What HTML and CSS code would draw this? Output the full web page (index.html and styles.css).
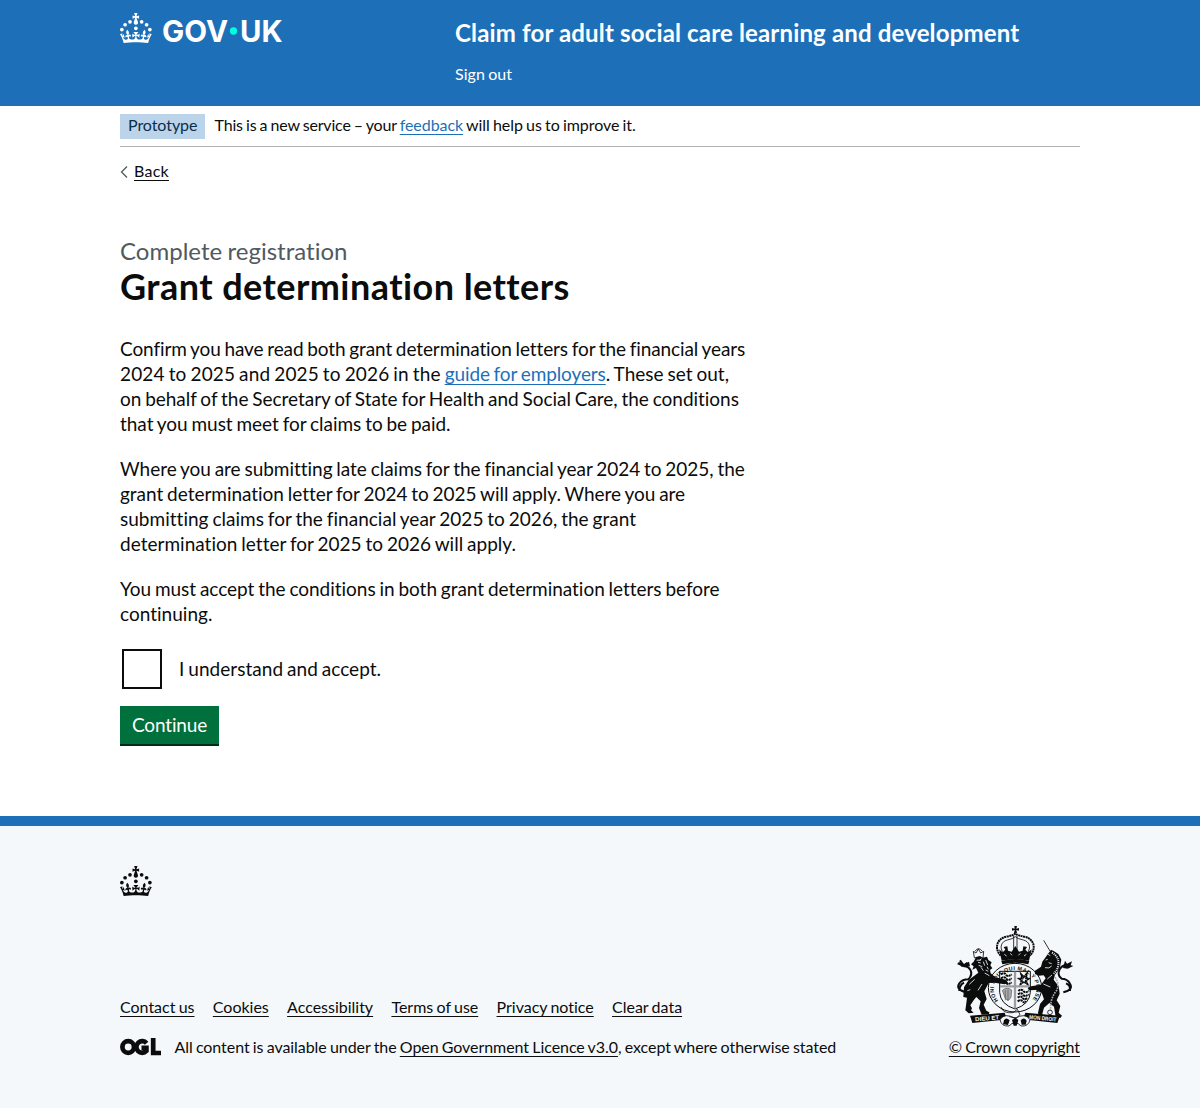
FILE: index.html
```html
<!DOCTYPE html>
<html lang="en">
<head>
<meta charset="utf-8">
<title>Grant determination letters</title>
<link rel="stylesheet" href="styles.css">
</head>
<body>
<svg class="symbols" width="0" height="0" aria-hidden="true">
  <symbol id="crown" viewBox="0 0 64 60">
    <circle cx="20" cy="17.6" r="3.7"/><circle cx="10.2" cy="23.5" r="3.7"/><circle cx="3.7" cy="33.2" r="3.7"/>
    <circle cx="31.7" cy="30.6" r="3.7"/><circle cx="43.3" cy="17.6" r="3.7"/><circle cx="53.2" cy="23.5" r="3.7"/><circle cx="59.7" cy="33.2" r="3.7"/>
    <path d="M33.1,9.8c.2-.1.3-.3.5-.5l4.6,2.4v-6.8l-4.6,1.5c-.1-.2-.3-.3-.5-.5l1.9-5.9h-6.7l1.9,5.9c-.2.1-.3.3-.5.5l-4.6-1.5v6.8l4.6-2.4c.1.2.3.3.5.5l-2.6,8c-.9,2.8,1.2,5.7,4.1,5.7h0c3,0,5.1-2.9,4.1-5.7l-2.6-8ZM37,37.9s-3.4,3.8-4.1,6.1c2.2,0,4.2-.5,6.4-2.8l-.7,8.5c-2-2.8-4.4-4.1-5.7-3.8.1,3.1.5,6.7,5.8,7.2,3.7.3,6.7-1.5,7-3.8.4-2.6-2-4.3-3.7-1.6-1.4-4.5,2.4-6.1,4.9-3.2-1.9-4.5-1.8-7.7,2.4-10.9,3,4,2.6,7.3-1.2,11.1,2.4-1.3,6.2,0,4,4.6-1.2-2.8-3.7-2.2-4.2.2-.3,1.7.7,3.7,3,4.2,1.9.3,4.7-.9,7-5.9-1.3,0-2.4.7-3.9,1.7l2.4-8c.6,2.3,1.4,3.7,2.2,4.5.6-1.6.5-2.8,0-5.3l5,1.8c-2.6,3.6-5.2,8.7-7.3,17.5-7.4-1.1-15.7-1.7-24.5-1.7h0c-8.8,0-17.1.6-24.5,1.7-2.1-8.9-4.7-13.9-7.3-17.5l5-1.8c-.5,2.5-.6,3.7,0,5.3.8-.8,1.6-2.3,2.2-4.5l2.4,8c-1.5-1-2.6-1.7-3.9-1.7,2.3,5,5.2,6.2,7,5.9,2.3-.4,3.3-2.4,3-4.2-.5-2.4-3-3.1-4.2-.2-2.2-4.6,1.6-6,4-4.6-3.7-3.7-4.2-7.1-1.2-11.1,4.2,3.2,4.3,6.4,2.4,10.9,2.5-2.8,6.3-1.3,4.9,3.2-1.8-2.7-4.1-1-3.7,1.6.3,2.3,3.3,4.1,7,3.8,5.4-.5,5.7-4.2,5.8-7.2-1.3-.2-3.7,1-5.7,3.8l-.7-8.5c2.2,2.3,4.2,2.7,6.4,2.8-.7-2.3-4.1-6.1-4.1-6.1h10.6,0Z"/>
  </symbol>
</svg>

<header class="header">
  <div class="container header-inner">
    <div class="header-logo">
      <svg class="logo" viewBox="0 0 324 60" role="img" aria-label="GOV.UK">
        <use href="#crown" width="64" height="60"/>
        <text class="wordmark" x="84" y="57.5" textLength="132" lengthAdjust="spacingAndGlyphs">GOV</text>
        <circle class="dot" cx="227" cy="36" r="7.3"/>
        <text class="wordmark" x="240" y="57.5" textLength="85" lengthAdjust="spacingAndGlyphs">UK</text>
      </svg>
    </div>
    <div class="header-content">
      <div class="service-name">Claim for adult social care learning and development</div>
      <a class="sign-out" href="#">Sign out</a>
    </div>
  </div>
</header>

<div class="container">
  <div class="phase-banner">
    <strong class="tag">Prototype</strong>
    <span class="phase-text"><span class="close">This is a new service – your </span><a class="link" href="#">feedback</a> will help us to improve it.</span>
  </div>
  <a class="back-link" href="#"><svg class="chevron" viewBox="0 0 8 12"><path d="M7 .5 L1.5 6 L7 11.5"/></svg><span>Back</span></a>

  <main class="main">
    <span class="caption">Complete registration</span>
    <h1 class="heading">Grant determination letters</h1>
    <p class="body"><span class="snug">Confirm you have read both grant determination letters for the financial years</span><br>
      <span class="wide">2024 to 2025 and 2025 to 2026 in the </span><a class="link snug" href="#">guide for employers</a><span class="loose">. These set out,</span><br>
      <span class="even">on behalf of the Secretary of State for Health and Social Care, the conditions</span><br>
      <span class="even">that you must meet for claims to be paid.</span></p>
    <p class="body"><span class="even">Where you are submitting late claims for the financial year 2024 to 2025, the</span><br>
      <span class="even">grant determination letter for 2024 to 2025 will apply. Where you are</span><br>
      <span class="loose">submitting claims for the financial year 2025 to 2026, the grant</span><br>
      <span class="loose">determination letter for 2025 to 2026 will apply.</span></p>
    <p class="body"><span class="even">You must accept the conditions in both grant determination letters before</span><br>
      <span class="loose">continuing.</span></p>
    <label class="checkbox"><input class="checkbox-input" type="checkbox"><span class="checkbox-label">I understand and accept.</span></label>
    <button class="button" type="button">Continue</button>
  </main>
</div>

<footer class="footer">
  <div class="container">
    <svg class="footer-crown" viewBox="0 0 64 60"><use href="#crown" width="64" height="60"/></svg>
    <div class="footer-meta">
      <div>
        <nav class="footer-links">
          <a href="#">Contact us</a><a href="#">Cookies</a><a href="#">Accessibility</a><a href="#">Terms of use</a><a href="#">Privacy notice</a><a href="#">Clear data</a>
        </nav>
        <div class="licence">
          <svg class="ogl" viewBox="0 0 41 18" role="img" aria-label="OGL">
            <circle cx="8.2" cy="9" r="5.8"/>
            <path d="M26.6 5.2 A5.8 5.8 0 1 0 26.4 13 V9.8 H21.5"/>
            <path d="M33.2 0 V15 H41"/>
          </svg>
          <span>All content is available under the <a href="#">Open Government Licence v3.0</a>, except where otherwise stated</span>
        </div>
      </div>
      <a class="copyright" href="#">
        <svg class="arms" viewBox="30 30 360 309" aria-hidden="true">
          <!-- Royal crown -->
          <path d="M208 33h8l-2 8 8-2v8l-8-2 2 9h-9l2-9-8 2v-8l8 2z"/>
          <path class="rope" d="M167 122C145 98 158 70 184 65q18-3 27-9q9 6 27 9c26 5 39 33 17 57"/>
          <path class="thin" d="M176 116C161 96 170 79 187 75q16-3 24-10q8 7 24 10c17 4 26 21 11 41M206 62v48M216 62v48"/>
          <path d="M162 103l11 9 8-8-5-8 11-2 2 13 11 3 11-17 11 17 11-3 2-13 11 2-5 8 8 8 11-9-8 34q-41-9-82 0z"/>
          <path class="pale" d="M178 118l7 5M196 115l5 6M220 121l6-6M237 123l7-5"/>
          <!-- Garter and shield -->
          <ellipse class="garter" cx="210" cy="218" rx="80" ry="73"/>
          <path d="M169 138q42-12 84 0l-3 10q-39-9-78 0z"/>
          <path class="shield" d="M164 169H256V232Q254 268 210 282Q166 268 164 232Z"/>
          <path id="motto-ring" class="none" d="M160 256A64 56 0 1 1 260 256"/>
          <text class="motto" textLength="262"><textPath href="#motto-ring">HONI SOIT QUI MAL Y PENSE</textPath></text>
          <path class="quarter" d="M168 178q10-7 15 1t17-1M168 190q11-7 16 1t16-1M168 202q10-7 15 1t17-1M220 228q9-8 15 0t17-1M219 238q10-7 15 1t17-1M218 248q10-7 15 1t15-1M218 259q10-7 15 0t9-1"/>
          <path class="quarter" d="M229 179l7 7 9-9-2 12 8 2-8 6 4 10-10-7-10 7 3-11-7-5 9-1z"/>
          <path class="harp" d="M172 226q14-12 28-1l-2 22q-9 17-18 1zM181 226v30M189 224v34"/>
          <path class="bar" d="M210 170V280M165 214H255"/>
          <!-- Lion -->
          <path class="thin" d="M88 128l-3-19 8 5 7-12 7 12 9-5-2 20zM90 109q10-16 22 0"/>
          <path d="M93 126l12-3 8 5 13-3 4 10 10 7-4 9 6 9-7 5 2 10 14 12 20 4 13 4 5 8-10 5-31-5-17 1-13 25 7 23-9 17 8 18 9 5-1 6-22 1-8-20 5-20-13-13-7 8-11 17 5 9-3 6 8 7-15 2-10-9 3-22 2-16-11-2 2-29 14-22 29-22-7-14-11 5 4-10-8-6 8-8z"/>
          <path class="pale" d="M95 136l13-1M99 142l8 2M115 140l4 12M122 135l6 15M126 155l4 8M101 151l11 4M119 174l14 8M89 193l-16 15M76 224l-9 3M111 207l-12 19M108 157l7 10M130 169l-8-4M109 131l-5 6"/>
          <path class="tail" d="M60 231Q31 222 43 205Q52 193 70 193Q84 178 76 164Q68 151 55 154M57 203q-14 7-14 25M45 136l12 17M38 145l20 8M67 143l-11 9"/>
          <path d="M40 140l18 7 14-7 3 14-12 1-14 0z"/>
          <!-- Unicorn -->
          <path class="thin" d="M296 76l19 32"/>
          <path d="M318 104l8 4 14 9 9 17-5 27-14 18-4 15 15 20 3 22-9 20 11 17-5 20 10 9-5 7-14-3-5-31-14-11-16 14-5 18 5 13-16-3-2-13 6-26 12-14-7-20-18-8-20 1-4-7 10-5 30-5 14-19-6-9-15 1-11-5-1-9 19-13 4-15z"/>
          <path class="pale mane" d="M321 113q22 12 19 38q-3 16-14 25"/>
          <path class="pale" d="M309 118l7 4M302 135l6-2M300 158q13 4 20-5M321 180l-14 12M295 207l21 9M311 143l9 3"/>
          <path class="chain" d="M330 187q17 24 1 45t-14 55"/>
          <circle class="thin" cx="315" cy="292" r="7"/>
          <path class="tail" d="M355 232q31-8 20-26-8-15-25-15-16-12-5-30 8-12 20-10M363 205q14 5 12 23"/>
          <path d="M360 137l6 9 15-7-4 12 8 2-17 8-14-2z"/>
          <!-- Motto ribbon -->
          <path d="M75 302l104-9 6 17-17 5-86 9zM345 302l-104-9-6 17 17 5 85 9z"/>
          <path class="ribbon" d="M165 314q14-22 45-4q31-18 45 4-4 21-27 19-8-10-18-9-10-1-18 9-23 2-27-19z"/>
          <path d="M177 316q6-11 17 0l-5 14-15-2zM227 316q10-11 18 1l-3 12-12 0zM201 315l10-7 9 7-5 17h-9z"/>
          <path class="thin" d="M168 276q5 20 36 17l13-10 8 16-11 10-21-4"/>
          <text class="ribbon-text" transform="translate(91 319) rotate(-5)" textLength="72" lengthAdjust="spacingAndGlyphs">DIEU ET</text>
          <text class="ribbon-text" transform="translate(252 312) rotate(5)" textLength="82" lengthAdjust="spacingAndGlyphs">MON DROIT</text>
        </svg>
        <span>© Crown copyright</span>
      </a>
    </div>
  </div>
</footer>
</body>
</html>
```
FILE: styles.css
```css
* { box-sizing: border-box; }

body {
  margin: 0;
  background: #fff;
  color: #0b0c0c;
  font: 16px/20px Lato, "Liberation Sans", sans-serif;
  font-variant-ligatures: none;
  letter-spacing: -.06px;
  word-spacing: -.8px;
}

a {
  color: #0b0c0c;
  text-decoration-thickness: 1px;
  text-underline-offset: 2.5px;
  text-decoration-skip-ink: none;
}

.symbols { position: absolute; }
.container { width: 960px; margin: 0 auto; }

.header { height: 106px; background: #1d70b8; color: #fff; }
.header-inner { display: flex; }
.header-logo { width: 335px; padding-top: 13px; }
.logo { display: block; width: 162px; height: 30px; fill: #fff; overflow: visible; }
.wordmark { font: 700 59px Inter, "Liberation Sans", sans-serif; letter-spacing: 0; word-spacing: 0; }
.dot { fill: #00ffe0; }
.header-content { padding-top: 18px; }
.service-name {
  font-size: 24px;
  line-height: 30px;
  font-weight: 700;
  letter-spacing: .16px;
  word-spacing: 0;
}
.sign-out { display: block; margin-top: 16px; color: #fff; text-decoration: none; letter-spacing: .05px; }

.phase-banner {
  display: flex;
  align-items: flex-start;
  height: 41px;
  padding-top: 8px;
  border-bottom: 1px solid #b1b4b6;
}
.tag {
  width: 85px;
  height: 25px;
  margin-right: 9.5px;
  padding: 1px 8px;
  background: #bbd4ea;
  color: #0c2d4a;
  font-weight: 400;
}
.phase-text { padding-top: 1px; letter-spacing: -.06px; }
.close { letter-spacing: -.165px; }
.link { color: #1d70b8; }

.back-link {
  display: flex;
  align-items: center;
  width: max-content;
  margin-top: 14px;
  text-decoration: none;
  letter-spacing: .25px;
}
.back-link span { text-decoration: underline 1px; text-underline-offset: 2.5px; }
.chevron { width: 8px; height: 12px; margin-right: 6px; fill: none; stroke: #505a5f; stroke-width: 1.3; position: relative; top: 1px; }

.main { padding-top: 55px; }
.caption { display: block; color: #505a5f; font-size: 24px; line-height: 30px; letter-spacing: .01px; }
.heading {
  margin: 0 0 30px;
  font-size: 36px;
  line-height: 40px;
  font-weight: 700;
  letter-spacing: .444px;
  word-spacing: 0;
}
.body {
  width: 630px;
  margin: 0 0 20px;
  font-size: 19px;
  line-height: 25px;
  word-spacing: -1px;
  white-space: nowrap;
}
.snug { letter-spacing: -.1px; }
.wide { letter-spacing: .14px; }
.loose { letter-spacing: .02px; }
.even { letter-spacing: -.025px; }

.checkbox {
  display: flex;
  align-items: center;
  gap: 17px;
  margin: 23px 0 17px 2px;
  font-size: 19px;
  line-height: 25px;
  letter-spacing: .04px;
  word-spacing: -1px;
}
.checkbox-label { padding-bottom: 2px; }
.checkbox-input {
  appearance: none;
  width: 40px;
  height: 40px;
  margin: 0;
  border: 2px solid #0b0c0c;
  background: #fff;
}
.button {
  display: block;
  width: 99px;
  height: 38px;
  padding: 0;
  border: 0;
  background: #00703c;
  color: #fff;
  box-shadow: 0 2px 0 #002d18;
  font: 19px/38px Lato, "Liberation Sans", sans-serif;
  letter-spacing: -.15px;
}

.footer {
  height: 292px;
  margin-top: 72px;
  padding-top: 40px;
  border-top: 10px solid #1d70b8;
  background: #f4f8fb;
}
.footer-crown { display: block; width: 32px; height: 30px; fill: #0b0c0c; }
.footer-meta { display: flex; justify-content: space-between; align-items: flex-end; margin-top: 29px; }
.footer-links { display: flex; gap: 18.3px; letter-spacing: -.01px; }
.licence { display: flex; align-items: center; gap: 13.5px; margin-top: 20px; }
.ogl { width: 41px; height: 18px; fill: none; stroke: #0b0c0c; stroke-width: 4.7; }
.copyright { display: flex; flex-direction: column; align-items: center; text-decoration: none; letter-spacing: -.08px; }
.copyright span { text-decoration: underline 1px; text-underline-offset: 2.5px; }

.arms { display: block; width: 120px; height: 103px; margin: 0 0 9px 2px; fill: #0b0c0c; }
.none { fill: none; }
.thin { fill: none; stroke: #0b0c0c; stroke-width: 2.5; }
.rope { fill: none; stroke: #0b0c0c; stroke-width: 6; stroke-dasharray: 6 1.5; }
.garter { fill: #f4f8fb; stroke: #0b0c0c; stroke-width: 3; }
.shield { fill: #f4f8fb; stroke: #0b0c0c; stroke-width: 3; }
.quarter { fill: none; stroke: #0b0c0c; stroke-width: 6; stroke-dasharray: 7 1.5; }
.harp { fill: #aaa; stroke: #555; stroke-width: 2; }
.bar { fill: none; stroke: #9b9fa1; stroke-width: 7; }
.pale { fill: none; stroke: #f4f8fb; stroke-width: 2.5; }
.mane { stroke-width: 6; stroke-dasharray: 3 3; }
.tail { fill: none; stroke: #0b0c0c; stroke-width: 6; }
.chain { fill: none; stroke: #a9adaf; stroke-width: 5; stroke-dasharray: 5 3; }
.ribbon { fill: #f4f8fb; stroke: #0b0c0c; stroke-width: 2.5; }
.motto { font: 700 16px "Liberation Sans", sans-serif; letter-spacing: 0; word-spacing: 0; }
.ribbon-text { fill: #f4f8fb; font: 700 17px "Liberation Sans", sans-serif; letter-spacing: 0; word-spacing: 0; }
```
